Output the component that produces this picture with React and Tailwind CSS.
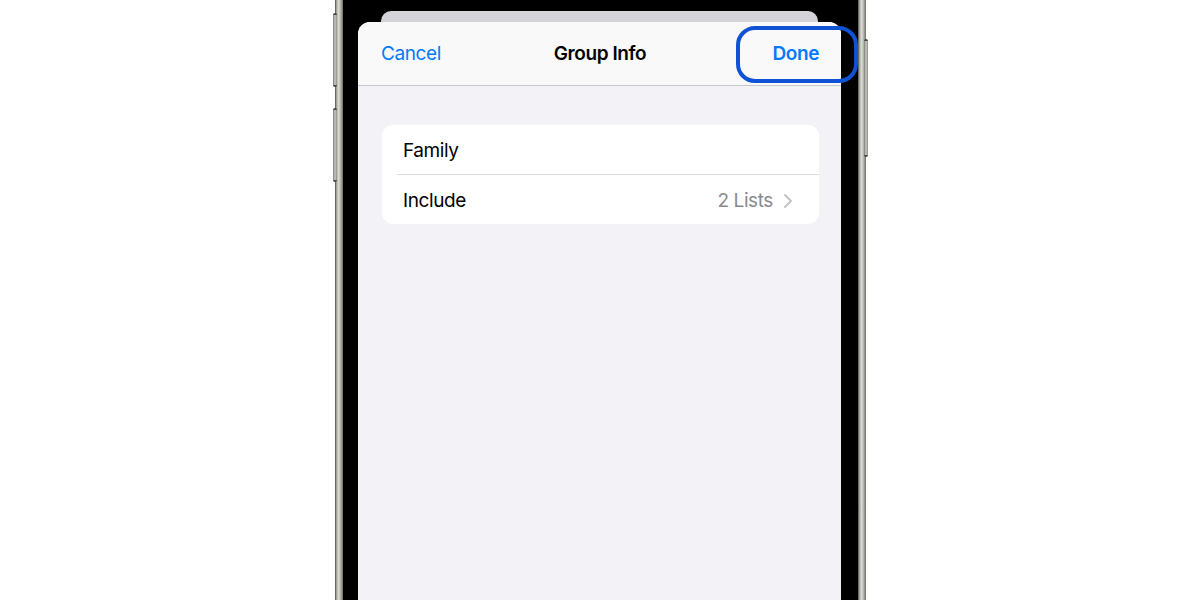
const font = { fontFamily: "Inter, 'Liberation Sans', sans-serif" };

// steel edge of the phone body
const rim =
  "w-[8px] bg-[linear-gradient(90deg,#4a4a48_0%,#a9a8a2_20%,#dedcd5_45%,#b3b2ab_70%,#6d6c68_100%)]";

const SideButton = ({ className }) => (
  <div
    className={
      "absolute w-[4px] rounded-[2px] border-y-2 border-[#4a4a48] bg-[linear-gradient(90deg,#7a7974,#c9c8c1,#8d8c87)] " +
      className
    }
  />
);

const Chevron = () => (
  <svg width="10" height="16" viewBox="0 0 10 16" className="ml-[10px]">
    <polyline
      points="2,2 8,8 2,14"
      fill="none"
      stroke="#c4c4c7"
      strokeWidth="2"
      strokeLinecap="round"
      strokeLinejoin="round"
    />
  </svg>
);

const Row = ({ label, value, chevron }) => (
  <div className="flex h-[49px] items-center pl-[21px] pr-[26px] pt-[3px] tracking-[-0.4px]">
    <span className="flex-1 text-[19px] text-black">{label}</span>
    {value && <span className="text-[19px] text-[#8a8a8e]">{value}</span>}
    {chevron && <Chevron />}
  </div>
);

export default function App() {
  return (
    <div className="h-[600px] w-[1200px] overflow-hidden bg-white" style={font}>
      <div className="relative ml-[335px] flex h-[600px] w-[531px]">
        <SideButton className="left-[-2px] top-[13px] h-[74px]" />
        <SideButton className="left-[-2px] top-[108px] h-[74px]" />
        <SideButton className="right-[-2px] top-[39px] h-[118px]" />

        <div className={rim} />
        <div className="flex flex-1 bg-black pl-[15px] pr-[17px]">
          <div className="flex flex-1 flex-col bg-black pt-[11px]">
            <div className="mx-[23px] h-[11px] rounded-t-[10px] bg-[#d4d4d8]" />
            <div className="flex flex-1 flex-col overflow-hidden rounded-t-[12px] bg-[#f2f2f7]">
              <div className="flex h-[64px] items-center border-b border-[#c8c8cc] bg-[#f9f9f9] pl-[23px] pr-[22px] pt-[2px] tracking-[-0.4px]">
                <span className="flex-1 text-[19px] text-[#007aff]">Cancel</span>
                <span className="text-[19px] font-semibold text-black">Group Info</span>
                <span className="flex-1 text-right text-[19px] font-semibold text-[#007aff]">
                  Done
                </span>
              </div>
              <div className="mx-[24px] mr-[22px] mt-[39px] overflow-hidden rounded-[11px] bg-white">
                <Row label="Family" />
                <div className="ml-[15px] h-px bg-[#dcdcde]" />
                <Row label="Include" value="2 Lists" chevron />
              </div>
            </div>
          </div>
        </div>
        <div className={rim} />

        {/* callout ring around the Done button */}
        <div className="absolute left-[401px] top-[26px] h-[57px] w-[122px] rounded-[19px] border-[4px] border-[#0f52d4]" />
      </div>
    </div>
  );
}
